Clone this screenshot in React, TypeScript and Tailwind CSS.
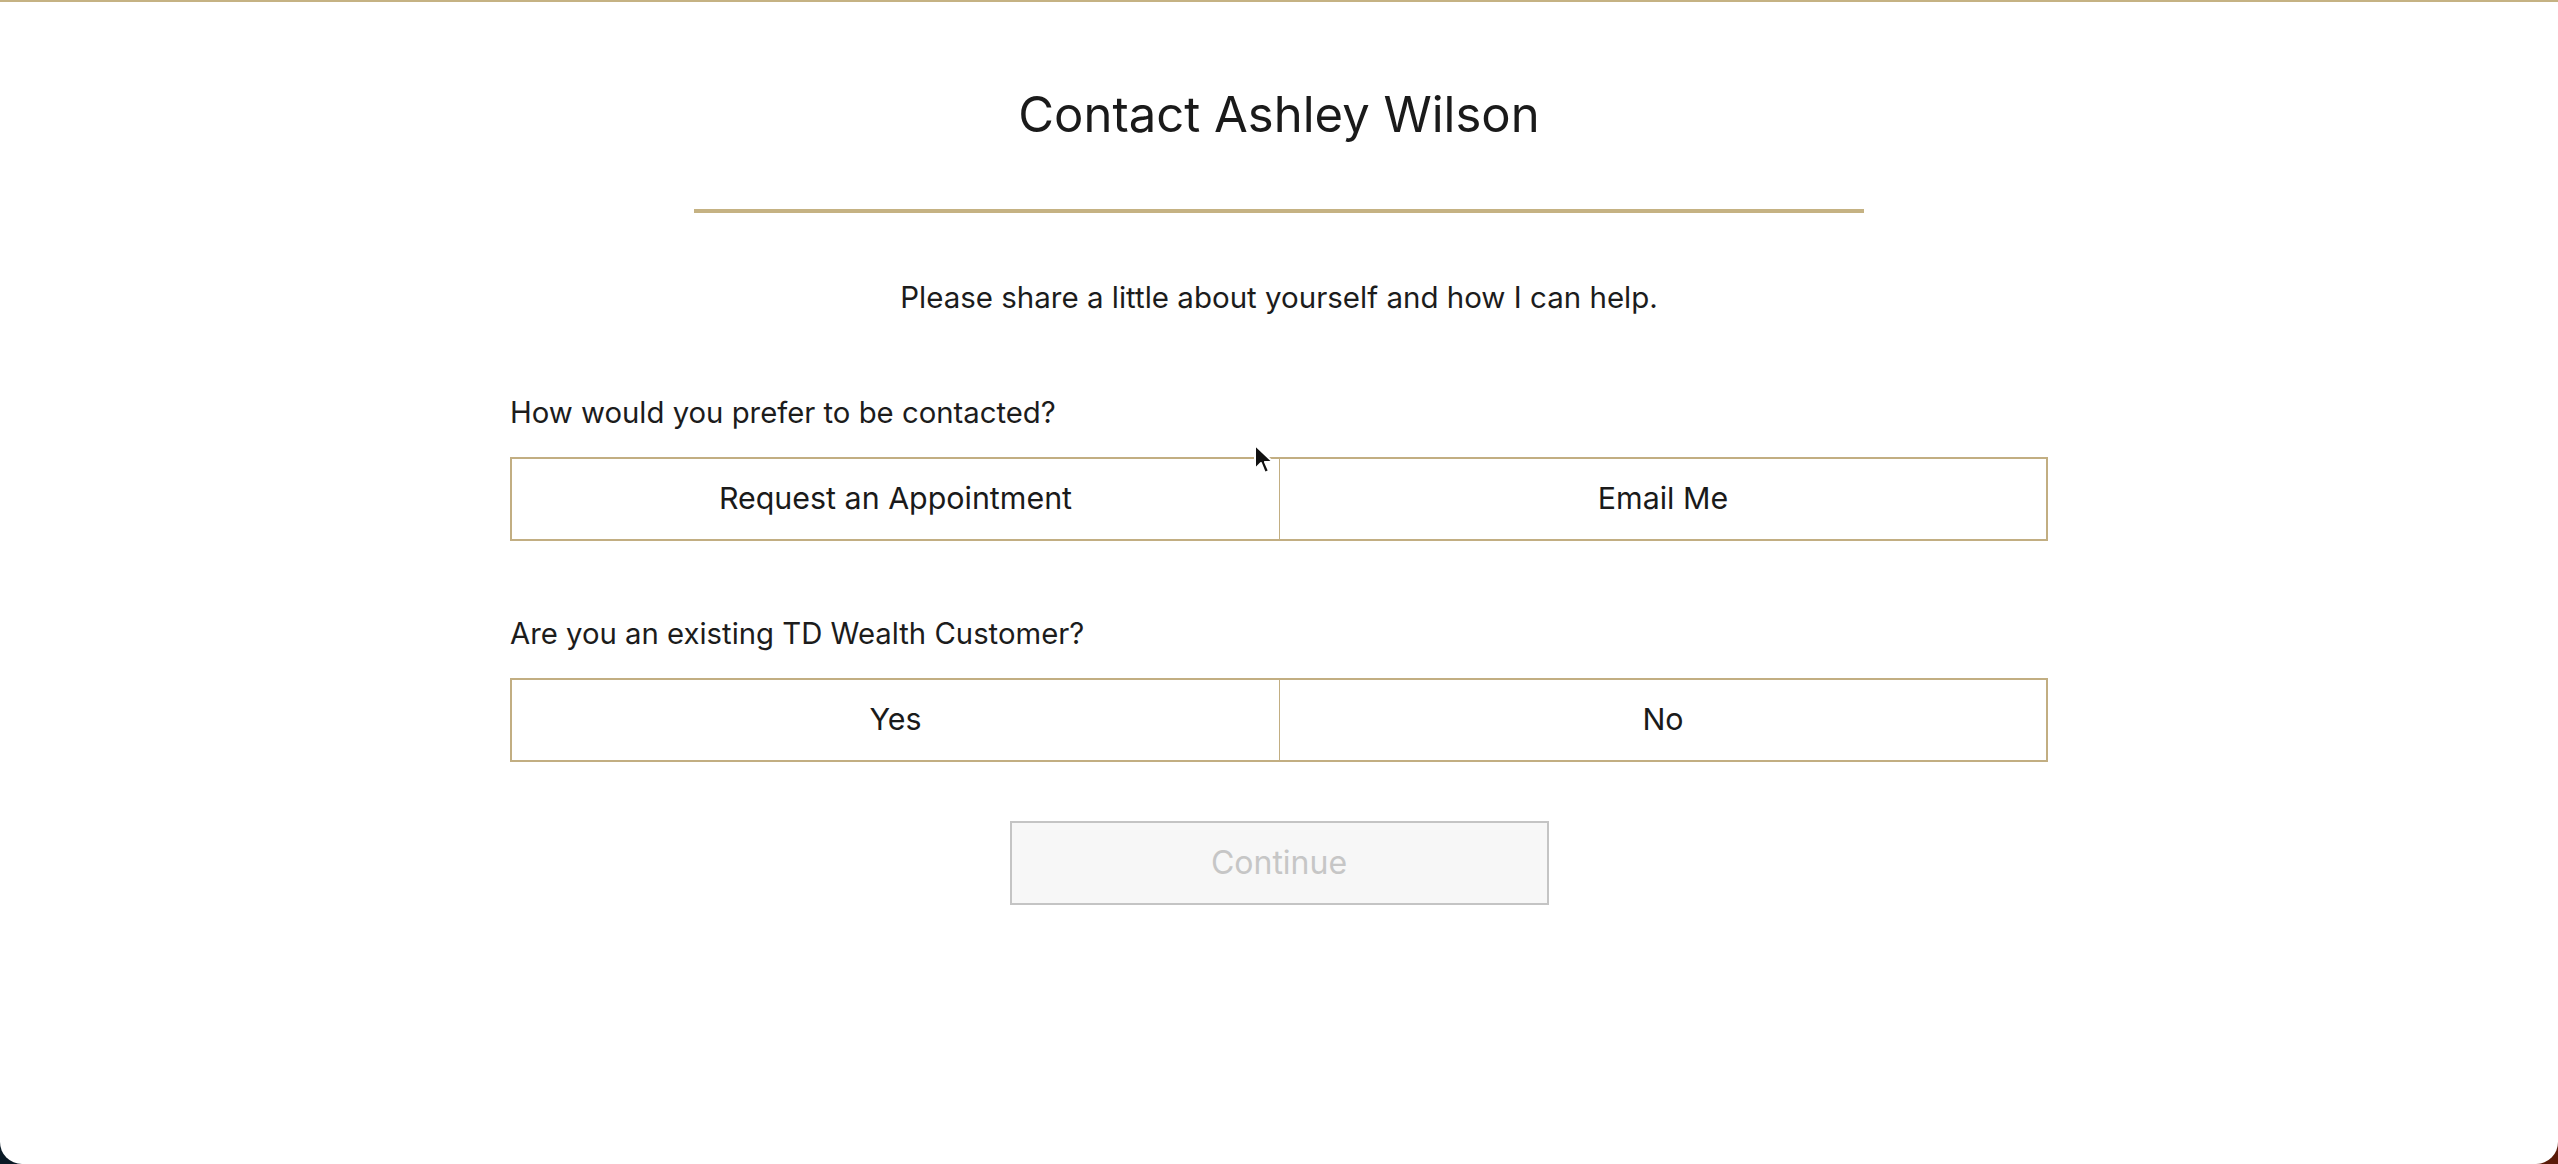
import React from "react";

const gold = "border-[#c2ae82]";

function Choice({ left, right }: { left: string; right: string }) {
  return (
    <div className="grid grid-cols-2 h-[84px]">
      <button className={`border-y-2 border-l-2 ${gold} bg-white text-[30.4px] text-[#1a1a1a]`}>{left}</button>
      <button className={`border-y-2 border-r-2 border-l ${gold} bg-white text-[30.4px] text-[#1a1a1a]`}>{right}</button>
    </div>
  );
}

export default function App() {
  return (
    <div
      className="h-[1164px] w-full bg-gradient-to-r from-[#0a1a26] to-[#5a1a08]"
      style={{ fontFamily: "Inter, 'Noto Sans', sans-serif" }}
    >
      <div className="relative h-full bg-white rounded-b-[22px] border-t-2 border-[#c5b283]">
        <div className="flex flex-col items-center">
          <h1 className="mt-[80px] h-[66px] leading-[66px] text-[49px] font-normal text-[#1a1a1a]">Contact Ashley Wilson</h1>
          <div className="mt-[61px] h-[4px] w-[1170px] bg-[#c5b283]" />
          <p className="mt-[66px] leading-[36px] text-[29.5px] text-[#1c1c1c]">Please share a little about yourself and how I can help.</p>
          <div className="w-[1538px] mt-[80px] flex flex-col">
            <div className="leading-[36px] text-[29.3px] text-[#1c1c1c]">How would you prefer to be contacted?</div>
            <div className="mt-[26px]">
              <Choice left="Request an Appointment" right="Email Me" />
            </div>
            <div className="mt-[75px] leading-[36px] text-[29.3px] text-[#1c1c1c]">Are you an existing TD Wealth Customer?</div>
            <div className="mt-[26px]">
              <Choice left="Yes" right="No" />
            </div>
          </div>
          <button className="mt-[59px] h-[84px] w-[539px] border-2 border-[#c4c4c4] bg-[#f7f7f7] text-[32px] text-[#c6c6c6]">Continue</button>
        </div>
        <svg className="absolute left-[1253px] top-[441px]" width="22" height="34" viewBox="0 0 22 34">
          <path d="M2 2 L2 26 L8 20 L12 30 L16 28 L12 19 L20 19 Z" fill="#111" stroke="#fff" strokeWidth="2" strokeLinejoin="round" />
        </svg>
      </div>
    </div>
  );
}
